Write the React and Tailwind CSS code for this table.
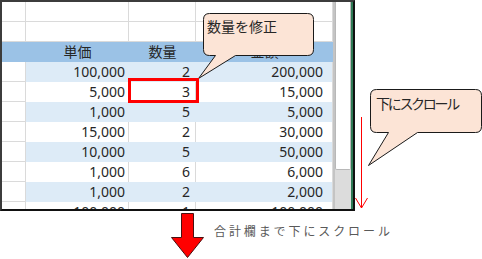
import React from "react";

const rows = [
  ["100,000", "2", "200,000"],
  ["5,000", "3", "15,000"],
  ["1,000", "5", "5,000"],
  ["15,000", "2", "30,000"],
  ["10,000", "5", "50,000"],
  ["1,000", "6", "6,000"],
  ["1,000", "2", "2,000"],
  ["100,000", "1", "100,000"],
];

const font = "font-['Noto_Sans','Noto_Sans_CJK_JP',sans-serif]";

const EmptyRow = () => (
  <div className="flex h-[20px] shrink-0">
    <div className="w-[24px] border-r border-b border-[#dadada]" />
    <div className="w-[103px] border-r border-b border-[#dadada]" />
    <div className="w-[67px] border-r border-b border-[#dadada]" />
    <div className="w-[137px] border-r border-b border-[#dadada]" />
  </div>
);

const Sheet = () => (
  <div className="w-[355px] h-[211px] border-2 border-[#3c3c3c] border-b-[#111] border-r-[#111] flex overflow-hidden bg-white">
    <div className="w-[331px] flex flex-col text-[14px] text-[#262626]">
      <EmptyRow />
      <EmptyRow />
      <div className="flex h-[20px] bg-[#9bc2e6] leading-[20px] shrink-0">
        <div className="w-[24px]" />
        <div className="w-[103px] text-center">単価</div>
        <div className="w-[67px] text-center">数量</div>
        <div className="w-[137px] text-center">金額</div>
      </div>
      {rows.map((r, i) => {
        const band = i % 2 === 0;
        const line = band ? "border-transparent" : "border-[#dadada]";
        return (
          <div key={i} className="flex h-[20px] leading-[20px] shrink-0">
            <div className="w-[24px] border-r border-b border-[#dadada]" />
            <div className={`w-[103px] text-right pr-[3px] border-r ${line} ${band ? "bg-[#ddebf7]" : "bg-white"}`}>{r[0]}</div>
            <div className={`w-[67px] text-right pr-[5px] border-r ${line} ${band ? "bg-[#ddebf7]" : "bg-white"}`}>{r[1]}</div>
            <div className={`w-[137px] text-right pr-[9px] border-r border-[#dadada] ${band ? "bg-[#ddebf7]" : "bg-white"}`}>{r[2]}</div>
          </div>
        );
      })}
    </div>
    <div className="w-[18px] flex flex-col bg-[#dcdcdc] border-l-2 border-[#c4c4c4]">
      <div className="h-[168px] shrink-0 bg-white border border-[#b8b8b8] border-t-0 rounded-b-[2px]" />
    </div>
    <div className="w-[2px] bg-[#2e7a55]" />
  </div>
);

const Annotations = () => (
  <svg className="absolute left-0 top-0 pointer-events-none" width="482" height="259" viewBox="0 0 482 259">
    <path
      d="M209.5,13.5 H307.5 Q313.5,13.5 313.5,19.5 V49.5 Q313.5,55.5 307.5,55.5 H235.5 L198.5,78.5 L215.5,55.5 H209.5 Q203.5,55.5 203.5,49.5 V19.5 Q203.5,13.5 209.5,13.5 Z"
      fill="#fce4d6"
      stroke="#1a1a1a"
      strokeWidth="1"
    />
    <path
      d="M376.5,89.5 H475.5 Q481.5,89.5 481.5,95.5 V126.5 Q481.5,132.5 475.5,132.5 H417.5 L368.5,165.5 L388.5,132.5 H376.5 Q370.5,132.5 370.5,126.5 V95.5 Q370.5,89.5 376.5,89.5 Z"
      fill="#fce4d6"
      stroke="#1a1a1a"
      strokeWidth="1"
    />
    <path d="M361.5,117 V208 M355.5,198 L361.5,208 L367.5,198" fill="none" stroke="#ff0000" strokeWidth="1" />
    <path
      d="M181.5,213.5 H193.5 V237.5 H203.5 L187.5,257.5 L171.5,237.5 H181.5 Z"
      fill="#ff0000"
      stroke="#4a1010"
      strokeWidth="1"
    />
  </svg>
);

export default function App() {
  return (
    <div className={`relative w-[482px] h-[259px] bg-white overflow-hidden ${font}`}>
      <Sheet />
      <Annotations />
      <div className="absolute left-[128px] top-[78px] w-[71px] h-[25px] border-[3px] border-[#ff0000]" />
      <div className="absolute left-[207px] top-[17px] text-[14px] leading-[20px] text-[#262626]">数量を修正</div>
      <div className="absolute left-[376px] top-[94px] text-[14px] leading-[20px] tracking-[-2.3px] text-[#262626]">下にスクロール</div>
      <div className="absolute left-[214px] top-[224px] text-[12px] leading-[16px] tracking-[2.9px] text-[#595959]">合計欄まで下にスクロール</div>
    </div>
  );
}
